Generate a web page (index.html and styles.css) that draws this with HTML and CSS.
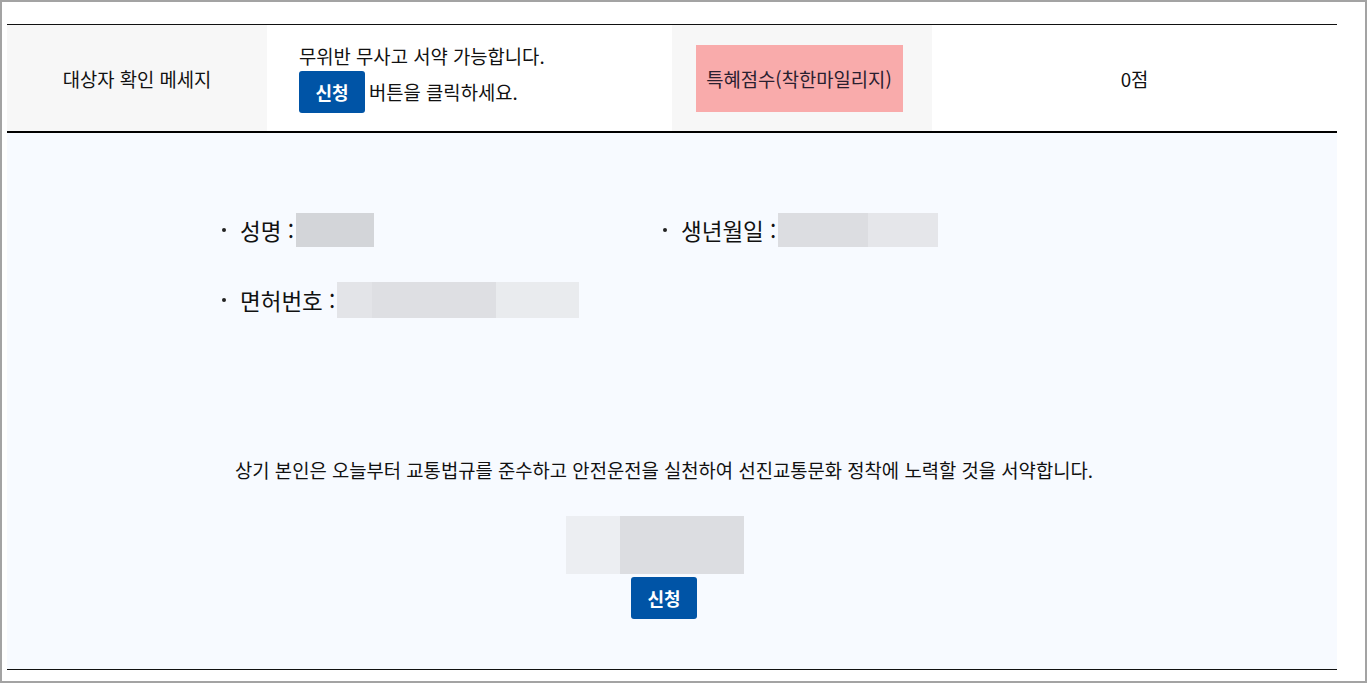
FILE: index.html
```html
<!DOCTYPE html>
<html lang="ko">
<head>
<meta charset="utf-8">
<link rel="stylesheet" href="styles.css">
</head>
<body>
<div class="frame">
  <div class="table">
    <div class="row">
      <div class="cell head">대상자 확인 메세지</div>
      <div class="cell msg">
        <div class="msg-line">무위반 무사고 서약 가능합니다.</div>
        <div class="msg-line"><span class="btn">신청</span> 버튼을 클릭하세요.</div>
      </div>
      <div class="cell head"><span class="pink">특혜점수(착한마일리지)</span></div>
      <div class="cell val">0점</div>
    </div>
  </div>
  <div class="section">
    <div class="info">
      <div class="item"><span class="dot"></span><span class="label">성명 :</span><span class="blur">
        <span class="seg s1" style="width:78px"></span></span></div>
      <div class="item"><span class="dot"></span><span class="label">생년월일 :</span><span class="blur">
        <span class="seg s2" style="width:90px"></span><span class="seg s3" style="width:70px"></span></span></div>
      <div class="item tall"><span class="dot"></span><span class="label">면허번호 :</span><span class="blur">
        <span class="seg s4" style="width:35px"></span><span class="seg s5" style="width:124px"></span><span class="seg s6" style="width:83px"></span></span></div>
    </div>
    <p class="pledge">상기 본인은 오늘부터 교통법규를 준수하고 안전운전을 실천하여 선진교통문화 정착에 노력할 것을 서약합니다.</p>
    <div class="sign">
      <span class="seg s7" style="width:54px"></span><span class="seg s8" style="width:124px"></span>
    </div>
    <div class="submit"><span class="btn">신청</span></div>
  </div>
</div>
</body>
</html>
```

FILE: styles.css
```css
* { box-sizing: border-box; }
html, body { margin: 0; padding: 0; }
body {
  font-family: "Noto Sans CJK KR", "Noto Sans", sans-serif;
  color: #111;
  background: #fff;
}
.frame {
  width: 1367px;
  height: 683px;
  border: 2px solid #a3a3a3;
  padding: 22px 28px 0 5px;
  background: #fff;
}
.table { border-top: 1px solid #111; }
.row {
  display: grid;
  grid-template-columns: 260px 405px 260px 1fr;
  height: 108px;
  border-bottom: 2px solid #000;
}
.cell {
  display: flex;
  align-items: center;
  justify-content: center;
  font-size: 18.8px;
}
.head { background: #f7f7f7; }
.msg {
  flex-direction: column;
  align-items: flex-start;
  justify-content: flex-start;
  padding: 18px 0 0 32px;
}
.msg-line { line-height: 26px; }
.msg-line + .msg-line { margin-top: 2px; display: flex; align-items: center; gap: 4px; }
.btn {
  display: inline-flex;
  align-items: center;
  justify-content: center;
  width: 66px;
  height: 42px;
  background: #0054a6;
  color: #fff;
  border-radius: 3px;
  font-size: 18px;
  font-weight: 700;
}
.pink {
  display: flex;
  align-items: center;
  justify-content: center;
  width: 207px;
  height: 67px;
  margin-right: 6px;
  background: #f9abab;
  color: #2a2030;
  font-size: 18.8px;
}
.val { background: #fff; }
.section {
  background: #f7faff;
  height: 537px;
  border-bottom: 1px solid #111;
  padding-top: 80px;
}
.info {
  margin-left: 215px;
  width: 882px;
  display: grid;
  grid-template-columns: 441px 441px;
  row-gap: 35px;
}
.item {
  display: flex;
  align-items: center;
  height: 34px;
  font-size: 22.5px;
}
.item.tall { height: 36px; }
.dot {
  width: 18px;
  display: flex;
  justify-content: flex-start;
}
.dot::before {
  content: "";
  width: 4px;
  height: 4px;
  border-radius: 50%;
  background: #222;
}
.label { margin-right: 2px; }
.blur { display: flex; height: 100%; }
.seg { display: block; height: 100%; }
.s1 { background: #d3d5d9; }
.s2 { background: #dcdde1; }
.s3 { background: #e5e6ea; }
.s4 { background: #e3e4e8; }
.s5 { background: #dedfe3; }
.s6 { background: #e9ebee; }
.s7 { background: #eceef2; }
.s8 { background: #dcdde1; }
.pledge {
  margin: 140px 16px 0 0;
  text-align: center;
  font-size: 18.8px;
  line-height: 24px;
}
.sign {
  display: flex;
  justify-content: center;
  height: 58px;
  margin: 34px 0 0 0;
  padding-right: 34px;
}
.submit {
  display: flex;
  justify-content: center;
  margin-top: 3px;
  padding-right: 16px;
}
```
